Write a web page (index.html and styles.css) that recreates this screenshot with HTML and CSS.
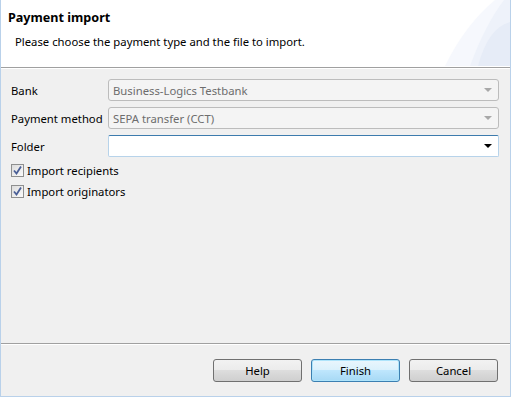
FILE: index.html
```html
<!DOCTYPE html>
<html lang="en">
<head>
    <meta charset="UTF-8">
    <title>Payment import</title>
    <link rel="stylesheet" href="styles.css">
</head>
<body>
    <div class="window">
        <div class="header">
            <svg class="header-deco" width="70" height="66" viewBox="0 0 70 66">
                <path d="M70 0 L55 0 Q25 25 5 66 L70 66 Z" fill="#f6f8fd"/>
                <path d="M70 0 L64 0 Q45 25 30 66 L70 66 Z" fill="#eef2fa"/>
                <path d="M70 22 Q48 28 38 66 L70 66 Z" fill="#e6ecf7"/>
            </svg>
            <h1>Payment import</h1>
            <p>Please choose the payment type and the file to import.</p>
        </div>

        <div class="content">
            <div class="form">
                <label>Bank</label>
                <div class="combo disabled">
                    <span>Business-Logics Testbank</span>
                    <span class="arrow"></span>
                </div>

                <label>Payment method</label>
                <div class="combo disabled">
                    <span>SEPA transfer (CCT)</span>
                    <span class="arrow"></span>
                </div>

                <label>Folder</label>
                <div class="combo active">
                    <span></span>
                    <span class="arrow"></span>
                </div>
            </div>

            <div class="checks">
                <div class="check-row">
                    <span class="checkbox">
                        <svg width="9" height="9" viewBox="0 0 9 9"><path d="M1 4.5 L3.5 7.5 L8 0.5" fill="none" stroke="#4a5f97" stroke-width="1.8"/></svg>
                    </span>
                    <span>Import recipients</span>
                </div>
                <div class="check-row">
                    <span class="checkbox">
                        <svg width="9" height="9" viewBox="0 0 9 9"><path d="M1 4.5 L3.5 7.5 L8 0.5" fill="none" stroke="#4a5f97" stroke-width="1.8"/></svg>
                    </span>
                    <span>Import originators</span>
                </div>
            </div>
        </div>

        <div class="footer">
            <button class="btn">Help</button>
            <button class="btn default">Finish</button>
            <button class="btn">Cancel</button>
        </div>
    </div>
</body>
</html>
```

FILE: styles.css
```css
html, body {
    margin: 0;
    padding: 0;
}
body {
    font-family: "Noto Sans", "DejaVu Sans", sans-serif;
    font-size: 11.3px;
    color: #000;
    background: #f0f0f0;
}
.window {
    width: 511px;
    height: 397px;
    box-sizing: border-box;
    border: 1px solid #b9d1ea;
    border-top: none;
    background: #f0f0f0;
    display: flex;
    flex-direction: column;
}
.header {
    position: relative;
    height: 67px;
    background: #fff;
    border-bottom: 1px solid #a0a0a0;
    box-shadow: 0 1px 0 #fff;
    overflow: hidden;
}
.header-deco {
    position: absolute;
    top: 0;
    right: 0;
}
.header h1 {
    position: relative;
    margin: 0;
    padding: 9px 0 0 7px;
    font-size: 12.6px;
    font-weight: bold;
    line-height: 18px;
}
.header p {
    position: relative;
    margin: 0;
    padding: 6px 0 0 14px;
    line-height: 18px;
}
.content {
    flex: 1;
    padding: 11px 11px 0 10px;
}
.form {
    display: grid;
    grid-template-columns: 97px 1fr;
    row-gap: 6px;
    align-items: center;
}
.form label {
    white-space: nowrap;
}
.combo {
    height: 22px;
    box-sizing: border-box;
    border: 1px solid #bcbcbc;
    border-radius: 3px;
    display: flex;
    align-items: center;
    justify-content: space-between;
    padding: 0 6px 0 4px;
}
.combo.disabled {
    background: #f4f4f4;
    color: #6d6d6d;
}
.combo.active {
    background: #fff;
    border-color: #b7d3ea;
    border-top-color: #3d7bad;
    border-radius: 2px;
}
.arrow {
    width: 0;
    height: 0;
    border-left: 4px solid transparent;
    border-right: 4px solid transparent;
    border-top: 4px solid #a8a8a8;
}
.combo.active .arrow {
    border-top-color: #000;
}
.checks {
    margin-top: 7px;
    display: flex;
    flex-direction: column;
    gap: 8px;
}
.check-row {
    display: flex;
    align-items: center;
    gap: 3px;
    line-height: 13px;
}
.checkbox {
    width: 13px;
    height: 13px;
    box-sizing: border-box;
    border: 1px solid #8e8f8f;
    background: linear-gradient(135deg, #dcdcdc, #fbfbfb);
    display: flex;
    align-items: center;
    justify-content: center;
}
.footer {
    border-top: 1px solid #a0a0a0;
    box-shadow: inset 0 1px 0 #fff;
    padding: 15px 12px 14px 0;
    display: flex;
    justify-content: flex-end;
    gap: 9px;
}
.btn {
    width: 89px;
    height: 23px;
    font-family: inherit;
    font-size: 11.3px;
    color: #000;
    border: 1px solid #707070;
    border-radius: 3px;
    background: linear-gradient(#f2f2f2 0%, #ebebeb 50%, #dddddd 50%, #cfcfcf 100%);
    padding: 0;
}
.btn.default {
    border-color: #3c7fb1;
    background: linear-gradient(#eaf6fd 0%, #d9f0fc 50%, #bee6fd 50%, #a7d9f5 100%);
    box-shadow: inset 0 0 0 1px #aee4fb;
}
```
